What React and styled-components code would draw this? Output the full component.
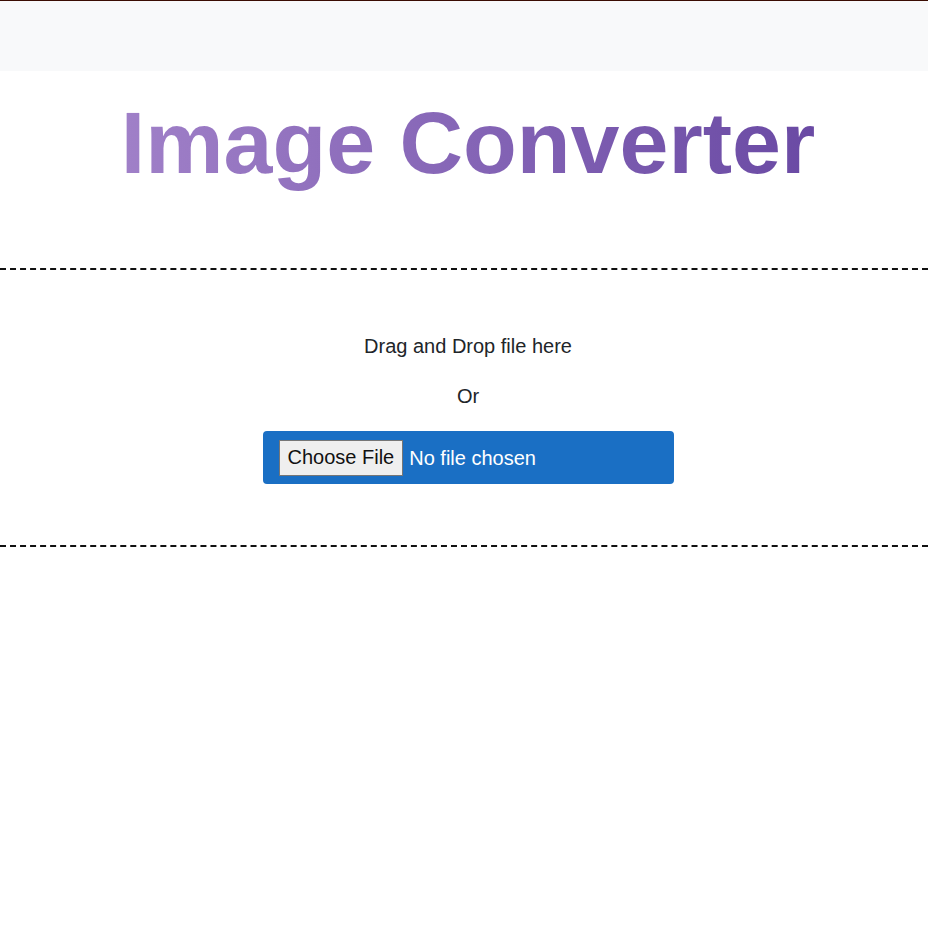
import React from "react";
import styled, { createGlobalStyle } from "styled-components";

const GlobalStyle = createGlobalStyle`
  * { box-sizing: border-box; }
  body {
    margin: 0;
    background: #fff;
    font-family: "Liberation Sans", Arial, sans-serif;
    color: #212529;
  }
`;

const Navbar = styled.nav`
  height: 71px;
  background: #f8f9fa;
  border-top: 1px solid #3a0c02;
`;

const Title = styled.h1`
  margin: 0;
  padding: 22px 0 0 8px;
  height: 197px;
  text-align: center;
  font-size: 88px;
  font-weight: 700;
  line-height: 100px;
  span {
    background: linear-gradient(to right, #a080c8, #6a4aa4);
    -webkit-background-clip: text;
    background-clip: text;
    color: transparent;
  }
`;

const DropZone = styled.div`
  border-top: 2px dashed #111;
  border-bottom: 2px dashed #111;
  padding: 63px 0 61px 8px;
  display: flex;
  flex-direction: column;
  align-items: center;
`;

const Line = styled.p`
  margin: 0 0 ${(p) => p.$gap}px;
  font-size: 20px;
  line-height: 27px;
  text-align: center;
`;

const FileBox = styled.label`
  width: 411px;
  height: 53px;
  background: #1a6fc4;
  border-radius: 4px;
  display: flex;
  align-items: center;
  padding-left: 16px;
`;

const FileInput = styled.input`
  font-family: "Liberation Sans", Arial, sans-serif;
  font-size: 20px;
  color: #fff;
  &::file-selector-button {
    font-family: "Liberation Sans", Arial, sans-serif;
    font-size: 20px;
    color: #111;
    background: #efefef;
    border: 1px solid #767676;
    border-radius: 0;
    padding: 3px 8px;
    margin-right: 6px;
    height: 36px;
  }
`;

export default function App() {
  return (
    <>
      <GlobalStyle />
      <Navbar />
      <Title>
        <span>Image Converter</span>
      </Title>
      <DropZone>
        <Line $gap={23}>Drag and Drop file here</Line>
        <Line $gap={21}>Or</Line>
        <FileBox>
          <FileInput type="file" />
        </FileBox>
      </DropZone>
    </>
  );
}
